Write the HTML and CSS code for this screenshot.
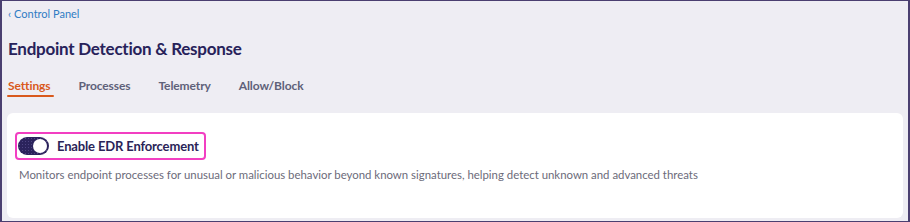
FILE: index.html
```html
<!DOCTYPE html>
<html lang="en">
<head>
<meta charset="utf-8">
<title>Endpoint Detection &amp; Response</title>
<link rel="stylesheet" href="styles.css">
</head>
<body>
<div class="frame">
  <a class="crumb" href="#"><span class="chev">‹</span> Control Panel</a>
  <h1 class="title">Endpoint Detection &amp; Response</h1>
  <nav class="tabs">
    <a class="tab active" href="#">Settings</a>
    <a class="tab" href="#">Processes</a>
    <a class="tab" href="#">Telemetry</a>
    <a class="tab" href="#">Allow/Block</a>
  </nav>
  <section class="card">
    <label class="toggle-row">
      <span class="switch"><span class="knob"></span></span>
      <span class="toggle-label">Enable EDR Enforcement</span>
    </label>
    <p class="desc">Monitors endpoint processes for unusual or malicious behavior beyond known signatures, helping detect unknown and advanced threats</p>
  </section>
</div>
</body>
</html>
```
FILE: styles.css
```css
* { box-sizing: border-box; }
html, body { margin: 0; padding: 0; }
body {
  width: 910px;
  height: 222px;
  font-family: Lato, "Noto Sans", sans-serif;
  background: #eeedf3;
}
.frame {
  width: 910px;
  height: 222px;
  border: 1px solid #4a3f70;
  border-left-width: 2px;
  border-right-width: 2px;
  background: #eeedf3;
  padding: 5px 5px 0 5px;
  display: flex;
  flex-direction: column;
}
.crumb {
  color: #2f7cc4;
  text-decoration: none;
  font-size: 11px;
  line-height: 16px;
  display: flex;
  gap: 3px;
  align-items: center;
  padding-left: 1px;
}
.chev { font-size: 11px; }
.title {
  margin: 16px 0 0 1px;
  font-size: 17px;
  line-height: 22px;
  font-weight: 700;
  letter-spacing: -0.25px;
  color: #27225a;
}
.tabs {
  display: flex;
  gap: 28px;
  margin-top: 18px;
  padding-left: 1px;
}
.tab {
  position: relative;
  font-size: 12px;
  font-weight: 700;
  line-height: 16px;
  letter-spacing: -0.1px;
  color: #5e6179;
  text-decoration: none;
  padding-bottom: 2px;
}
.tab.active {
  color: #d9591c;
}
.tab.active::after {
  content: "";
  position: absolute;
  left: -1px;
  right: -4px;
  bottom: -1px;
  height: 2px;
  background: #d9591c;
  border-radius: 1px;
}
.card {
  margin-top: 17px;
  background: #ffffff;
  border-radius: 6px;
  height: 105px;
  padding: 19px 12px 0 8px;
  display: flex;
  flex-direction: column;
  align-items: flex-start;
}
.toggle-row {
  display: flex;
  align-items: center;
  gap: 8px;
  border: 2px solid #f23fc2;
  border-radius: 4px;
  padding: 3px 5px 3px 1px;
}
.switch {
  width: 31px;
  height: 18px;
  border-radius: 9px;
  background-color: #2b235c;
  background-image: radial-gradient(circle, rgba(140, 130, 200, 0.35) 0.6px, transparent 0.8px);
  background-size: 3px 3px;
  display: flex;
  align-items: center;
  justify-content: flex-end;
  padding-right: 2px;
}
.knob {
  width: 14px;
  height: 14px;
  border-radius: 50%;
  background: #ffffff;
}
.toggle-label {
  font-size: 13px;
  font-weight: 700;
  line-height: 18px;
  letter-spacing: -0.15px;
  color: #2a2458;
}
.desc {
  margin: 7px 0 0 4px;
  font-size: 11.4px;
  line-height: 16px;
  color: #6c6b7a;
}
```
